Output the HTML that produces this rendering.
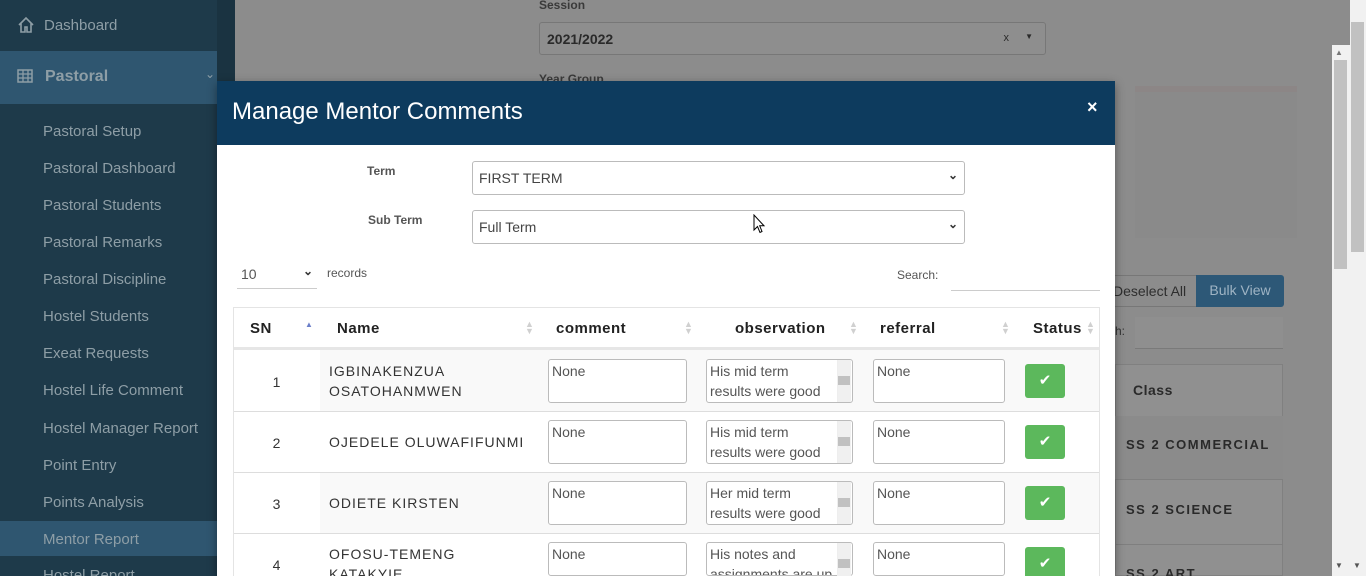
<!DOCTYPE html>
<html style="width:1366px;height:576px;overflow:hidden"><head><meta charset="utf-8"><style>
*{box-sizing:border-box;margin:0;padding:0}
body{width:1366px;height:576px;overflow:hidden;position:relative;background:#8c8c8c;font-family:"Liberation Sans",sans-serif}
.a{position:absolute}
.side{left:0;top:0;width:217px;height:576px;background:#1e3a4a}
.si{position:absolute;left:43px;font-size:15px;color:#8e9ea6}
.ta{position:absolute;background:#fff;border:1px solid #bbb;border-radius:3px;font-size:14px;color:#555;padding:1px 3px;line-height:20px}
.btn{position:absolute;left:1025px;width:40px;height:34px;background:#5cb85c;border-radius:3px;color:#fff;text-align:center;line-height:34px;font-size:15px}
.sn{position:absolute;left:233px;width:87px;text-align:center;font-size:14px;color:#333}
.nm{position:absolute;left:329px;font-size:14px;color:#333;letter-spacing:1px;line-height:20px}
.th{position:absolute;top:320px;font-size:15px;font-weight:bold;color:#222;letter-spacing:.5px}
.sort{position:absolute;top:321px;color:#d0d0d0;font-size:9px;line-height:7px}
.sb{position:absolute;left:837px;width:14px;background:#f0f0f0;border-left:1px solid #eee}
</style></head><body>
<div class="a side"></div>
<div class="a" style="left:0;top:51px;width:217px;height:53px;background:#2f5670"></div>
<div class="a" style="left:0;top:521px;width:217px;height:35px;background:#2f5670"></div>
<div class="a" style="left:217px;top:0;width:18px;height:576px;background:#1a3341"></div>
<div class="si" style="left:44px;top:17px">Dashboard</div>
<svg class="a" style="left:17px;top:16px" width="18" height="18" viewBox="0 0 18 18"><path d="M2 9 L9 2 L16 9 M4 7 V16 H8 V11 H10 V16 H14 V7" fill="none" stroke="#8e9ea6" stroke-width="1.6"/></svg>
<svg class="a" style="left:17px;top:69px" width="16" height="14" viewBox="0 0 16 14"><rect x="1" y="1" width="14" height="12" fill="none" stroke="#8e9ea6" stroke-width="1.5"/><path d="M1 5H15M1 9H15M6 1V13M11 1V13" stroke="#8e9ea6" stroke-width="1.3"/></svg>
<div class="si" style="left:45px;top:68px;font-weight:bold;font-size:16px">Pastoral</div>
<div class="si" style="left:205px;top:67px;font-size:12px">&#8964;</div>
<div class="si" style="top:123px">Pastoral Setup</div>
<div class="si" style="top:160px">Pastoral Dashboard</div>
<div class="si" style="top:197px">Pastoral Students</div>
<div class="si" style="top:234px">Pastoral Remarks</div>
<div class="si" style="top:271px">Pastoral Discipline</div>
<div class="si" style="top:308px">Hostel Students</div>
<div class="si" style="top:345px">Exeat Requests</div>
<div class="si" style="top:382px">Hostel Life Comment</div>
<div class="si" style="top:420px">Hostel Manager Report</div>
<div class="si" style="top:457px">Point Entry</div>
<div class="si" style="top:494px">Points Analysis</div>
<div class="si" style="top:531px">Mentor Report</div>
<div class="si" style="top:567px">Hostel Report</div>

<div class="a" style="left:539px;top:-2px;font-size:12px;color:#3a3a3a;font-weight:bold">Session</div>
<div class="a" style="left:539px;top:22px;width:507px;height:33px;border:1px solid #777;border-radius:3px;background:#8e8e8e;font-size:14px;font-weight:bold;color:#2a2a2a;padding:8px 7px">2021/2022<span style="position:absolute;right:36px;top:9px;font-size:11px;font-weight:normal">x</span><span style="position:absolute;right:12px;top:9px;font-size:8px">&#9660;</span></div>
<div class="a" style="left:539px;top:72px;font-size:12px;color:#3a3a3a;font-weight:bold">Year Group</div>
<div class="a" style="left:1135px;top:86px;width:162px;height:152px;background:#8a8a8a;border-top:6px solid #8c8686"></div>
<div class="a" style="left:1108px;top:275px;width:90px;height:32px;border:1px solid #777;border-radius:3px 0 0 3px;color:#2e2e2e;font-size:14px;line-height:31px;padding-left:4px">Deselect All</div>
<div class="a" style="left:1196px;top:275px;width:88px;height:32px;background:#2d5877;border-radius:0 3px 3px 0;color:#9fb4c4;font-size:14px;line-height:31px;text-align:center">Bulk View</div>
<div class="a" style="left:1115px;top:324px;font-size:12px;color:#333">h:</div>
<div class="a" style="left:1135px;top:317px;width:148px;height:32px;background:#8f8f8f;border-bottom:1px solid #7a7a7a"></div>
<div class="a" style="left:1115px;top:364px;width:168px;height:212px;background:#909090;border:1px solid #808080"></div>
<div class="a" style="left:1133px;top:382px;font-size:14px;font-weight:bold;color:#2a2a2a;letter-spacing:.5px">Class</div>
<div class="a" style="left:1115px;top:416px;width:168px;height:64px;background:#8b8b8b;border-bottom:1px solid #7f7f7f"></div>
<div class="a" style="left:1126px;top:437px;font-size:13px;font-weight:bold;color:#2a2a2a;letter-spacing:1.5px">SS 2 COMMERCIAL</div>
<div class="a" style="left:1126px;top:502px;font-size:13px;font-weight:bold;color:#2a2a2a;letter-spacing:1.5px">SS 2 SCIENCE</div>
<div class="a" style="left:1115px;top:544px;width:168px;height:1px;background:#7f7f7f"></div>
<div class="a" style="left:1126px;top:566px;font-size:13px;font-weight:bold;color:#2a2a2a;letter-spacing:1.5px;height:10px;overflow:hidden">SS 2 ART</div>
<div class="a" style="left:1332px;top:45px;width:18px;height:531px;background:#f1f1f1"></div>
<div class="a" style="left:1334px;top:60px;width:13px;height:209px;background:#c1c1c1"></div>
<div class="a" style="left:1350px;top:0;width:16px;height:576px;background:#f1f1f1"></div>
<div class="a" style="left:1351px;top:22px;width:13px;height:230px;background:#c1c1c1"></div>
<div class="a" style="left:1335px;top:48px;font-size:8px;color:#777">&#9650;</div>
<div class="a" style="left:1335px;top:561px;font-size:8px;color:#555">&#9660;</div>
<div class="a" style="left:1353px;top:561px;font-size:8px;color:#555">&#9660;</div>

<div class="a" style="left:217px;top:81px;width:898px;height:495px;background:#fff;box-shadow:0 3px 9px rgba(0,0,0,.4)"></div>
<div class="a" style="left:217px;top:81px;width:898px;height:64px;background:#0d3b5e"></div>
<div class="a" style="left:232px;top:98px;font-size:24px;color:#fff">Manage Mentor Comments</div>
<div class="a" style="left:1087px;top:97px;font-size:18px;color:#fff;font-weight:bold">×</div>
<div class="a" style="left:367px;top:164px;font-size:12px;font-weight:bold;color:#555">Term</div>
<div class="a" style="left:368px;top:213px;font-size:12px;font-weight:bold;color:#555">Sub Term</div>
<div class="a" style="left:472px;top:161px;width:493px;height:34px;border:1px solid #bbb;border-radius:3px;font-size:14px;color:#444;padding:8px 6px">FIRST TERM<span style="position:absolute;right:6px;top:6px;font-size:12px;color:#333;font-weight:bold">&#8964;</span></div>
<div class="a" style="left:472px;top:210px;width:493px;height:34px;border:1px solid #bbb;border-radius:3px;font-size:14px;color:#444;padding:8px 6px">Full Term<span style="position:absolute;right:6px;top:6px;font-size:12px;color:#333;font-weight:bold">&#8964;</span></div>
<svg class="a" style="left:753px;top:214px" width="13" height="20" viewBox="0 0 13 20"><path d="M1 1 V16 L4.5 12.5 L7 18.5 L9 17.5 L6.7 11.8 H11 Z" fill="#fff" stroke="#000" stroke-width="1"/></svg>
<div class="a" style="left:237px;top:260px;width:80px;height:29px;border-bottom:1px solid #ccc;font-size:14px;color:#555;padding:6px 4px">10<span style="position:absolute;right:4px;top:4px;font-size:12px;color:#333;font-weight:bold">&#8964;</span></div>
<div class="a" style="left:327px;top:266px;font-size:12px;color:#555">records</div>
<div class="a" style="left:897px;top:268px;font-size:12px;color:#555">Search:</div>
<div class="a" style="left:951px;top:290px;width:149px;height:1px;background:#ccc"></div>

<div class="a" style="left:233px;top:307px;width:867px;height:269px;border:1px solid #e4e4e4;border-bottom:none"></div>
<div class="a" style="left:234px;top:347px;width:865px;height:3px;background:#e6e6e6"></div>
<div class="th" style="left:250px">SN</div><div class="a" style="left:305px;top:320px;font-size:8px;color:#6b7fc9">&#9650;</div>
<div class="th" style="left:337px">Name</div><div class="sort" style="left:525px">▲<br>▼</div>
<div class="th" style="left:556px">comment</div><div class="sort" style="left:684px">▲<br>▼</div>
<div class="th" style="left:735px">observation</div><div class="sort" style="left:849px">▲<br>▼</div>
<div class="th" style="left:880px">referral</div><div class="sort" style="left:1001px">▲<br>▼</div>
<div class="th" style="left:1033px">Status</div><div class="sort" style="left:1086px">▲<br>▼</div>

<div class="a" style="left:234px;top:350px;width:865px;height:61px;background:#f9f9f9"></div>
<div class="a" style="left:234px;top:350px;width:86px;height:61px;background:#fff"></div>
<div class="a" style="left:234px;top:411px;width:865px;height:1px;background:#ddd"></div>
<div class="a" style="left:234px;top:473px;width:865px;height:60px;background:#f9f9f9"></div>
<div class="a" style="left:234px;top:473px;width:86px;height:60px;background:#fff"></div>
<div class="a" style="left:234px;top:472px;width:865px;height:1px;background:#ddd"></div>
<div class="a" style="left:234px;top:533px;width:865px;height:1px;background:#ddd"></div>

<div class="sn" style="top:374px">1</div>
<div class="nm" style="top:361px">IGBINAKENZUA<br>OSATOHANMWEN</div>
<div class="sn" style="top:435px">2</div>
<div class="nm" style="top:432px">OJEDELE OLUWAFIFUNMI</div>
<div class="sn" style="top:496px">3</div>
<div class="nm" style="top:493px">ODIETE KIRSTEN</div>
<div class="sn" style="top:557px">4</div>
<div class="nm" style="top:544px;height:32px;overflow:hidden">OFOSU-TEMENG<br>KATAKYIE</div>

<div class="ta" style="left:548px;top:359px;width:139px;height:44px">None</div>
<div class="ta" style="left:548px;top:420px;width:139px;height:44px">None</div>
<div class="ta" style="left:548px;top:481px;width:139px;height:44px">None</div>
<div class="ta" style="left:548px;top:542px;width:139px;height:34px">None</div>

<div class="ta" style="left:706px;top:359px;width:147px;height:44px;overflow:hidden">His mid term<br>results were good</div>
<div class="ta" style="left:706px;top:420px;width:147px;height:44px;overflow:hidden">His mid term<br>results were good</div>
<div class="ta" style="left:706px;top:481px;width:147px;height:44px;overflow:hidden">Her mid term<br>results were good</div>
<div class="ta" style="left:706px;top:542px;width:147px;height:34px;overflow:hidden">His notes and<br>assignments are up</div>
<div class="sb" style="top:360px;height:42px"></div><div class="a" style="left:838px;top:376px;width:12px;height:9px;background:#c1c1c1"></div>
<div class="sb" style="top:421px;height:42px"></div><div class="a" style="left:838px;top:437px;width:12px;height:9px;background:#c1c1c1"></div>
<div class="sb" style="top:482px;height:42px"></div><div class="a" style="left:838px;top:498px;width:12px;height:9px;background:#c1c1c1"></div>
<div class="sb" style="top:543px;height:33px"></div><div class="a" style="left:838px;top:559px;width:12px;height:9px;background:#c1c1c1"></div>

<div class="ta" style="left:873px;top:359px;width:132px;height:44px">None</div>
<div class="ta" style="left:873px;top:420px;width:132px;height:44px">None</div>
<div class="ta" style="left:873px;top:481px;width:132px;height:44px">None</div>
<div class="ta" style="left:873px;top:542px;width:132px;height:34px">None</div>

<div class="btn" style="top:364px">✔</div>
<div class="btn" style="top:425px">✔</div>
<div class="btn" style="top:486px">✔</div>
<div class="btn" style="top:547px;height:29px;border-radius:3px 3px 0 0">✔</div>
</body></html>
